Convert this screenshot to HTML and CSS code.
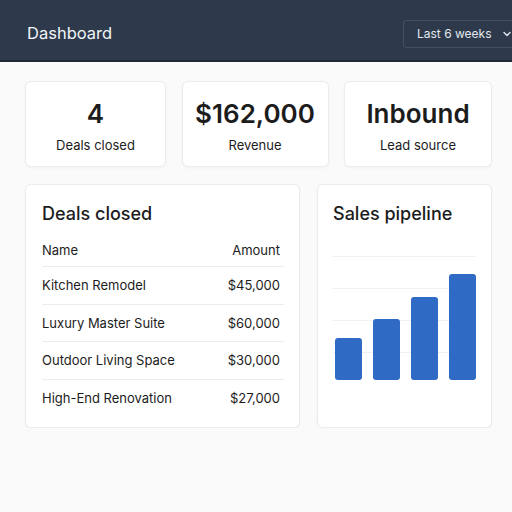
FILE: index.html
```html
<!DOCTYPE html>
<html>
<head>
    <title>Dashboard</title>
    <link rel="stylesheet" href="styles.css">
</head>
<body>
    <header class="topbar">
        <h1>Dashboard</h1>
        <div class="range">
            <span>Last 6 weeks</span>
            <svg width="10" height="10" viewBox="0 0 10 10"><path d="M2 3.5 L5 6.5 L8 3.5" fill="none" stroke="#e2e8f0" stroke-width="1.4" stroke-linecap="round" stroke-linejoin="round"/></svg>
        </div>
    </header>

    <main class="content">
        <section class="stats">
            <div class="card stat">
                <div class="value">4</div>
                <div class="label">Deals closed</div>
            </div>
            <div class="card stat">
                <div class="value">$162,000</div>
                <div class="label">Revenue</div>
            </div>
            <div class="card stat">
                <div class="value">Inbound</div>
                <div class="label">Lead source</div>
            </div>
        </section>

        <section class="panels">
            <div class="card deals">
                <h2>Deals closed</h2>
                <table>
                    <thead>
                        <tr><th>Name</th><th class="amt">Amount</th></tr>
                    </thead>
                    <tbody>
                        <tr><td>Kitchen Remodel</td><td class="amt">$45,000</td></tr>
                        <tr><td>Luxury Master Suite</td><td class="amt">$60,000</td></tr>
                        <tr><td>Outdoor Living Space</td><td class="amt">$30,000</td></tr>
                        <tr><td>High-End Renovation</td><td class="amt">$27,000</td></tr>
                    </tbody>
                </table>
            </div>
            <div class="card pipeline">
                <h2>Sales pipeline</h2>
                <div class="chart">
                    <div class="grid">
                        <div class="line"></div>
                        <div class="line"></div>
                        <div class="line"></div>
                        <div class="line"></div>
                    </div>
                    <div class="bars">
                        <div class="bar" style="height: 42px"></div>
                        <div class="bar" style="height: 61px"></div>
                        <div class="bar" style="height: 83px"></div>
                        <div class="bar" style="height: 106px"></div>
                    </div>
                </div>
            </div>
        </section>
    </main>
</body>
</html>
```

FILE: styles.css
```css
body {
    margin: 0;
    font-family: Inter, "Liberation Sans", sans-serif;
    background: #fafafa;
    color: #1c1c1c;
}
.topbar {
    height: 62px;
    background: #2e3a4b;
    border-bottom: 2px solid #1f2937;
    box-sizing: border-box;
    display: flex;
    align-items: center;
    justify-content: space-between;
    padding: 6px 0 0 27px;
}
.topbar h1 {
    margin: 0;
    font-size: 16.5px;
    font-weight: 400;
    color: #f1f5f9;
}
.range {
    width: 109px;
    height: 28px;
    box-sizing: border-box;
    border: 1px solid #435064;
    border-right: none;
    border-radius: 4px 0 0 4px;
    display: flex;
    align-items: center;
    gap: 10px;
    padding-left: 13px;
    font-size: 12px;
    white-space: nowrap;
    color: #e2e8f0;
    margin-top: 1px;
}
.content {
    padding: 19px 20px 0 25px;
}
.card {
    background: #fff;
    border: 1px solid #ececec;
    border-radius: 6px;
    box-shadow: 0 1px 3px rgba(0, 0, 0, 0.04);
    box-sizing: border-box;
}
.stats {
    display: grid;
    grid-template-columns: 141px 147px 148px;
    column-gap: 15.5px;
}
.stat {
    height: 86px;
    text-align: center;
    padding-top: 16px;
}
.value {
    font-size: 26px;
    font-weight: 600;
    line-height: 32px;
}
.label {
    font-size: 13px;
    margin-top: 7px;
}
.panels {
    display: grid;
    grid-template-columns: 275px 175px;
    column-gap: 17px;
    margin-top: 17px;
}
.panels h2 {
    margin: 0;
    font-size: 18px;
    font-weight: 500;
    line-height: 24px;
}
.deals {
    height: 244px;
    padding: 17px 15px 0 16px;
}
table {
    width: 100%;
    border-collapse: collapse;
    margin-top: 7px;
    font-size: 13px;
}
th {
    font-weight: 400;
    text-align: left;
    height: 33px;
    padding: 0;
    border-bottom: 1px solid #ececec;
}
td {
    height: 36.5px;
    padding: 0;
    border-bottom: 1px solid #ececec;
}
tbody tr:last-child td {
    border-bottom: none;
}
.amt {
    text-align: right;
    padding-right: 4px;
}
.pipeline {
    height: 244px;
    padding: 17px 15px 0 15px;
}
.chart {
    position: relative;
    height: 124px;
    margin-top: 30px;
}
.grid {
    display: flex;
    flex-direction: column;
    gap: 31px;
}
.line {
    height: 1px;
    background: #eef0f3;
}
.bars {
    position: absolute;
    left: 2px;
    right: 0;
    bottom: 0;
    display: flex;
    align-items: flex-end;
    gap: 11px;
}
.bar {
    width: 27px;
    background: #2f6bc4;
    border-radius: 3px;
}
```
